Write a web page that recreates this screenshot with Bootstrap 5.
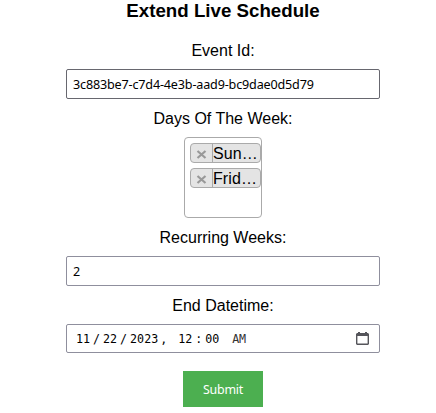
<!DOCTYPE html>
<html lang="en">
<head>
<meta charset="utf-8">
<title>Extend Live Schedule</title>
<link href="https://cdn.jsdelivr.net/npm/bootstrap@5.3.0/dist/css/bootstrap.min.css" rel="stylesheet">
<style>
body{font:16px/18px "Liberation Sans",Arial,sans-serif;color:#000;background:#fff;overflow:hidden}
.schedule{width:314px;margin-left:66px}
.title{font-size:18.72px;line-height:22px;font-weight:700;margin:0 0 20px;color:#000}
.caption{height:27px;line-height:18px;display:block}
.field{height:30px;border:1px solid #8f8f9d;border-radius:2px;padding:0 6px;font:12.6px/28px "Noto Sans",sans-serif;letter-spacing:-.17px;color:#000;background:#fff;width:100%;display:block;outline:0;margin-bottom:11px}
.field.hovered{border-color:#67676f}
.days{width:78px;height:81px;border:1px solid #aaa;border-radius:4px;padding:5px 0 0 5px;margin-bottom:11px}
.tag{width:71px;height:20px;margin-bottom:5px;background:#e4e4e4;border:1px solid #aaa;border-radius:4px}
.remove{width:22px;height:18px;border:0;border-right:1px solid #aaa;background:none;padding:0}
.remove svg{margin:2px auto 0}
.day{line-height:19px;letter-spacing:.1px}
.when{height:29px;font:11.67px/27px "DejaVu Sans Mono",monospace;letter-spacing:0;padding:0 10px 0 9px;margin-bottom:18px}
.when span{padding-top:2px}
.sep{width:13px;text-align:center}
.comma{width:9px;text-align:right}
.hour{margin-left:11px}
.half{margin-left:13px;letter-spacing:-.2px;color:#333}
.send{width:80px;height:36px;background:#4caf50;color:#fff;font:12.4px/35px "Noto Sans",sans-serif;letter-spacing:-.2px;border:0;border-radius:0;padding:1px 0 0}
</style>
<script src="https://cdn.jsdelivr.net/npm/bootstrap@5.3.0/dist/js/bootstrap.bundle.min.js"></script>
</head>
<body>
<form class="schedule text-center">
<h3 class="title">Extend Live Schedule</h3>
<label class="caption" for="event">Event Id:</label>
<input class="field hovered" id="event" value="3c883be7-c7d4-4e3b-aad9-bc9dae0d5d79">
<div class="caption">Days Of The Week:</div>
<div class="days mx-auto">
<div class="tag d-flex overflow-hidden"><button type="button" class="remove flex-shrink-0" aria-label="Remove Sunday"><svg class="d-block" width="11" height="11" viewBox="0 0 11 11"><path d="M1.5 2l8 7M9.5 2l-8 7" stroke="#999" stroke-width="2.2" fill="none"/></svg></button><span class="day">Sun…</span></div>
<div class="tag d-flex overflow-hidden"><button type="button" class="remove flex-shrink-0" aria-label="Remove Friday"><svg class="d-block" width="11" height="11" viewBox="0 0 11 11"><path d="M1.5 2l8 7M9.5 2l-8 7" stroke="#999" stroke-width="2.2" fill="none"/></svg></button><span class="day">Frid…</span></div>
</div>
<label class="caption" for="weeks">Recurring Weeks:</label>
<input class="field" id="weeks" value="2">
<div class="caption">End Datetime:</div>
<div class="field when d-flex align-items-center">
<span>11</span><span class="sep">/</span><span>22</span><span class="sep">/</span><span>2023</span><span class="comma">,</span><span class="hour">12</span><span class="sep">:</span><span>00</span><span class="half">AM</span>
<svg class="ms-auto" width="13" height="13" viewBox="0 0 13 13"><path fill="#55555b" fill-rule="evenodd" d="M2 0h2v1h5V0h2v1h1l1 1v10l-1 1H1l-1-1V2l1-1h1zM1.4 4v7.6h10.2V4z"/></svg>
</div>
<button type="button" class="btn send d-block mx-auto">Submit</button>
</form>
</body>
</html>
